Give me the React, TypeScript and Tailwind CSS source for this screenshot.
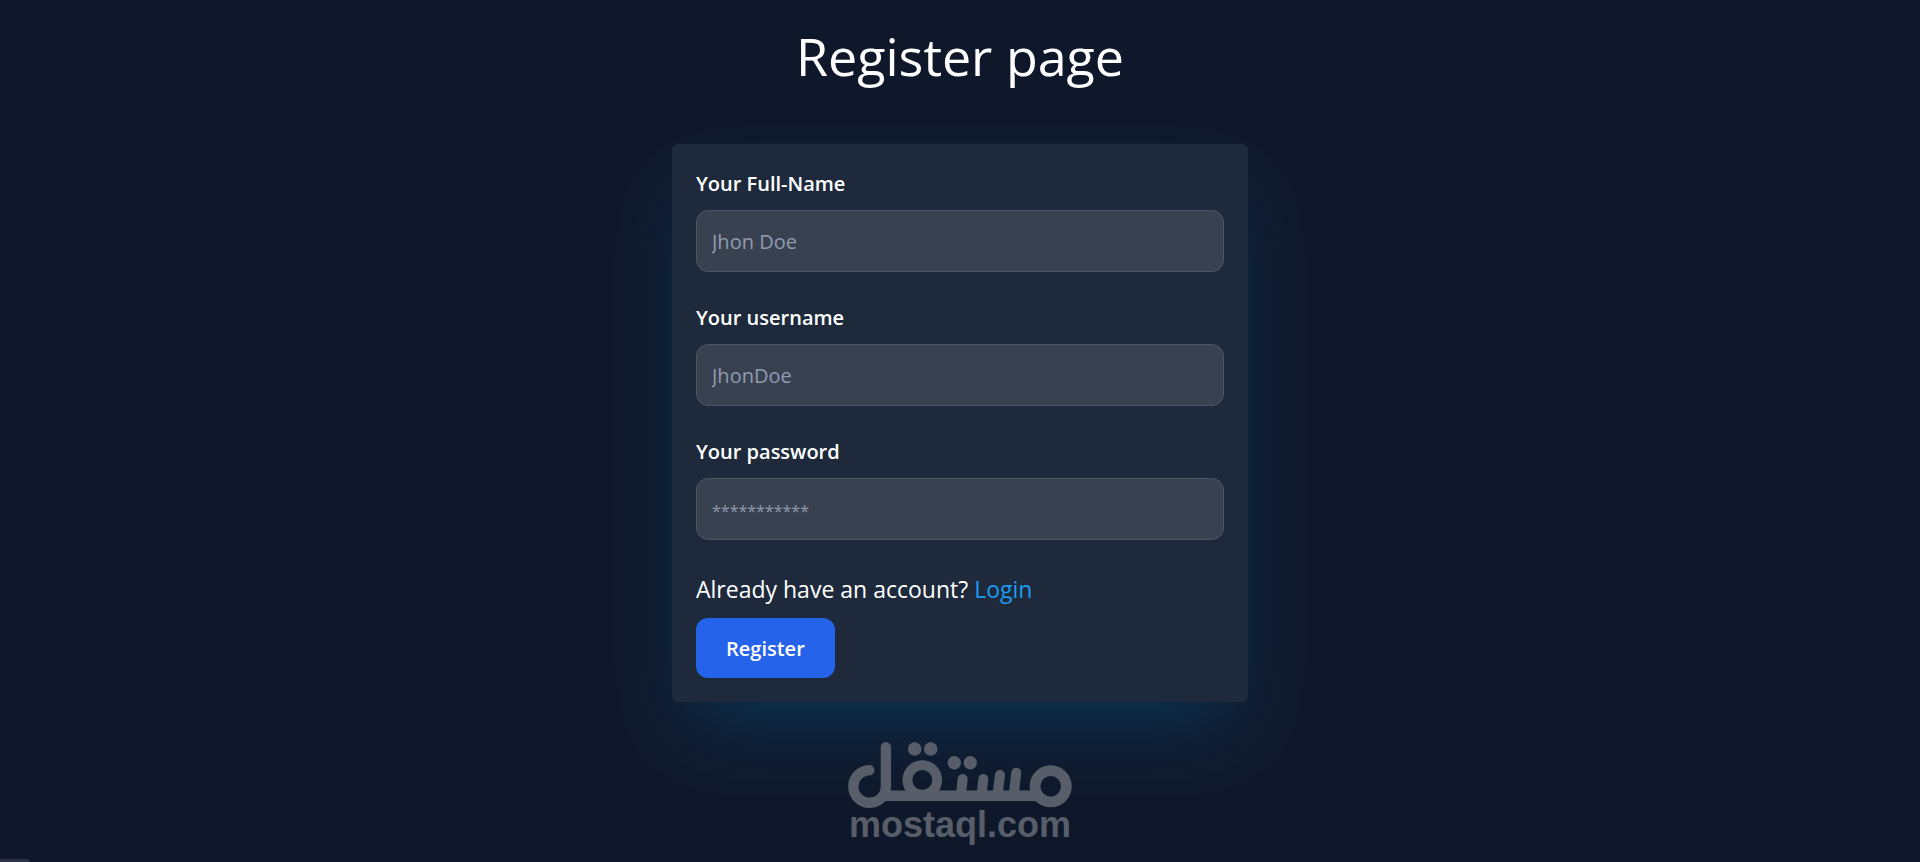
import { useState } from 'react'

interface FieldProps {
  id: string
  label: string
  type?: string
  placeholder: string
  value: string
  onChange: (value: string) => void
}

function Field({ id, label, type = 'text', placeholder, value, onChange }: FieldProps) {
  return (
    <div className="mb-[30px]">
      <label htmlFor={id} className="mb-2.5 block text-[20px] leading-8 font-semibold text-white">
        {label}
      </label>
      <input
        id={id}
        name={id}
        type={type}
        placeholder={placeholder}
        value={value}
        onChange={(e) => onChange(e.target.value)}
        className={`block w-full rounded-xl border border-gray-600 bg-[#394150] px-[15px] pt-4 pb-[14px] text-[20px] leading-[30px] text-white placeholder:text-[#8f9bb0] ${
          type === 'password' ? 'placeholder:text-[16px]' : ''
        }`}
      />
    </div>
  )
}

function MostaqlMark() {
  return (
    <div className="flex w-56 flex-col items-center text-[#585e69]">
      <svg viewBox="18 22 224 66" className="h-[66px] w-56" fill="none" stroke="currentColor" strokeLinecap="round">
        <path d="M39.3 50.2A16.3 16.3 0 1 0 55.9 66.3V27.3" strokeWidth="10.4" />
        <path d="M54 75.7H210" strokeWidth="10.6" strokeLinecap="butt" />
        <circle cx="92.3" cy="60" r="14.9" strokeWidth="9.8" />
        <circle cx="220.7" cy="66.3" r="15.7" strokeWidth="10.7" />
        <path d="M132.7 59L131 74M153.3 59L151.6 74M170 55L167.6 74M186.3 52.7L183.8 74" strokeWidth="10" />
        <g fill="currentColor" stroke="none">
          <circle cx="84.7" cy="29" r="6.8" />
          <circle cx="100.7" cy="29" r="6.8" />
          <circle cx="124.3" cy="42.7" r="6.7" />
          <circle cx="140.3" cy="42.7" r="6.7" />
        </g>
      </svg>
      <span className="font-['Liberation_Sans',sans-serif] text-[36px] leading-[34px] font-bold">mostaql.com</span>
    </div>
  )
}

export default function App() {
  const [fullName, setFullName] = useState('')
  const [username, setUsername] = useState('')
  const [password, setPassword] = useState('')

  return (
    <div className="relative flex min-h-screen flex-col items-center overflow-hidden bg-[#0f172a] font-['Open_Sans','Noto_Sans',sans-serif] text-white">
      <h1 className="mt-[26px] mb-[58px] text-[52px] leading-[60px]">Register page</h1>

      <form
        onSubmit={(e) => e.preventDefault()}
        className="w-full max-w-[576px] rounded-md bg-[#1e2a3c] p-6 shadow-[0_38px_75px_-18px] shadow-sky-500/20"
      >
        <Field id="fullName" label="Your Full-Name" placeholder="Jhon Doe" value={fullName} onChange={setFullName} />
        <Field id="username" label="Your username" placeholder="JhonDoe" value={username} onChange={setUsername} />
        <Field
          id="password"
          label="Your password"
          type="password"
          placeholder="***********"
          value={password}
          onChange={setPassword}
        />
        <p className="mb-2.5 text-[23px] leading-[38px]">
          Already have an account?{' '}
          <a href="#login" className="text-[#1d9bf0]">
            Login
          </a>
        </p>
        <button
          type="submit"
          className="block rounded-xl bg-[#2563eb] px-[30px] pt-4 pb-[14px] text-[20px] leading-[30px] font-semibold text-white"
        >
          Register
        </button>
      </form>

      <footer className="mt-10">
        <MostaqlMark />
      </footer>

      {/* top edge of the browser's link status bubble */}
      <div className="absolute bottom-0 left-0 h-[3px] w-[30px] rounded-tr-md bg-[#2c3046]" />
    </div>
  )
}
